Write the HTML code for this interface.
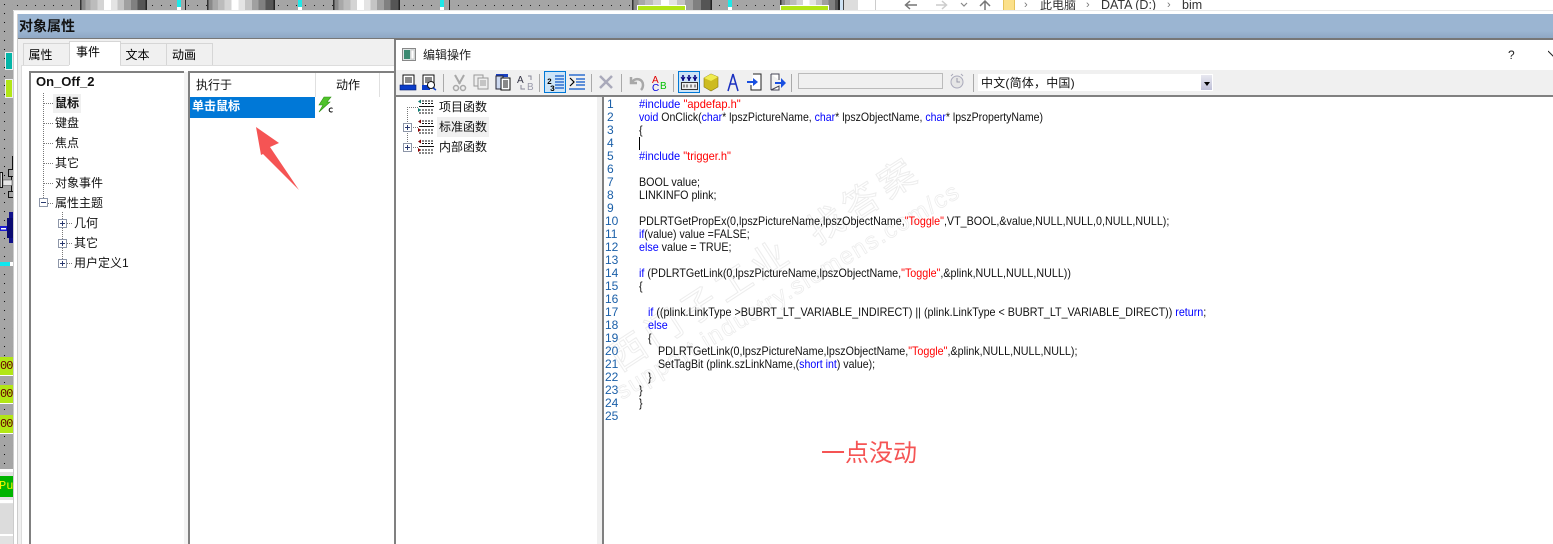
<!DOCTYPE html>
<html><head><meta charset="utf-8">
<style>
html,body{margin:0;padding:0;background:#fff}
#p{position:relative;width:1553px;height:544px;overflow:hidden;background:#fff;font-family:"Liberation Sans","Noto Sans CJK SC",sans-serif;color:#000}
#p div,#p svg{position:absolute}
.g{top:0;height:10px;background:linear-gradient(90deg,#333 0 2%,#8a8a8a 2% 8%,#a8a8a8 8% 16%,#bcbcbc 16% 26%,#d4d4d4 26% 36%,#fff 36% 46%,#e4e4e4 46% 56%,#c4c4c4 56% 66%,#a0a0a0 66% 76%,#808080 76% 86%,#555 86% 98%,#222 98% 100%)}
.c{top:0;height:10px;width:4px;background:linear-gradient(180deg,#1fe8e8 0 70%,#fff 70%)}
.t{font-size:12px;line-height:16px;white-space:nowrap;color:#111}
.k{font-size:12px;line-height:13px;white-space:pre;color:#111;left:639px;transform:scaleX(.894);transform-origin:0 0}
.n{font-size:12px;line-height:13px;color:#1a5fa8;left:607px}
.m{left:605px}
.k b{font-weight:normal;color:#00f}.k i{font-style:normal;color:#f00}
.tab{background:#f0f0f0;border:1px solid #d6d6d6;border-bottom:0;box-sizing:border-box;font-size:12px;text-align:center;padding-right:12px}
.grn{left:0;width:13px;background:#b2e616;font:12px/18px "Liberation Mono",monospace;letter-spacing:-1px;color:#600;overflow:hidden;text-align:left}
.pm{width:9px;height:9px;border:1px solid #8d96a8;background:#fff;box-sizing:border-box}
.pm:before{content:"";position:absolute;left:1px;top:3px;width:5px;height:1px;background:#2a3a70}
.pl:after{content:"";position:absolute;left:3px;top:1px;width:1px;height:5px;background:#2a3a70}
.dh{height:1px;background:repeating-linear-gradient(90deg,#777 0 1px,transparent 1px 2px)}
.dv{width:1px;background:repeating-linear-gradient(180deg,#777 0 1px,transparent 1px 2px)}
</style></head><body><div id="p">

<!-- background app -->
<div style="left:0;top:0;width:13px;height:470px;background-color:#a5a5a5;background-image:radial-gradient(#111 0.6px,transparent 0.8px);background-size:9px 9px"></div>
<div style="left:13px;top:0;width:845px;height:10px;background-color:#a5a5a5;background-image:radial-gradient(#222 0.6px,transparent 0.8px);background-size:9px 9px;background-position:0 1px"></div>
<div style="left:0;top:470px;width:13px;height:74px;background:#e2e2e2"></div>
<div style="left:5px;top:52px;width:8px;height:18px;background:#05b5a8;border:1px solid #eee;box-sizing:border-box"></div>
<div style="left:5px;top:79px;width:8px;height:19px;background:#b2e616;border:1px solid #eee;box-sizing:border-box"></div>
<svg style="left:0;top:150px" width="13" height="125" viewBox="0 0 13 125">
<path d="M12.500 6V20" stroke="#111"/>
<path d="M8.500 19.500h5v7h-5zM8.500 41.500h5v6h-5z" fill="#a5a5a5" stroke="#111"/>
<path d="M11.500 26v16" stroke="#111"/>
<path d="M0 22.500h2.500v15H0z" fill="#ddd" stroke="#111"/>
<rect x="3" y="30" width="9" height="5.500" fill="#e8e8e8" stroke="#444" stroke-width=".5"/>
<rect x="9" y="62" width="4" height="31" fill="#10108a"/><rect x="7" y="68" width="6" height="20" fill="#0a0a70"/>
<rect x="0" y="76" width="7" height="5" fill="#1a1ad0"/><rect x="1" y="78" width="5" height="1.500" fill="#fff"/>
<rect x="0" y="112" width="10" height="4" fill="#10e8f0"/><rect x="10" y="112" width="3" height="4" fill="#fff"/>
</svg>
<div class="grn" style="top:357px;height:18px">00</div>
<div class="grn" style="top:385px;height:18px">00</div>
<div class="grn" style="top:415px;height:18px">00</div>
<div style="left:0;top:375px;width:13px;height:1px;background:#fff"></div>
<div style="left:0;top:403px;width:13px;height:1px;background:#fff"></div>
<div style="left:0;top:433px;width:13px;height:1px;background:#fff"></div>
<div style="left:0;top:469px;width:13px;height:3px;background:#fff"></div>
<div style="left:0;top:476px;width:13px;height:21px;background:#00b400;color:#f4f400;font:12px/21px 'Liberation Mono',monospace;overflow:hidden;white-space:nowrap;text-indent:-1px">Pur</div>
<div style="left:0;top:500px;width:13px;height:3px;background:#fff"></div>
<div style="left:0;top:504px;width:13px;height:30px;background:#dcdcdc"></div>
<div style="left:0;top:534px;width:13px;height:2px;background:#fff"></div>

<!-- top strip gradients -->
<div class="g" style="left:80px;width:67px"></div><div class="g" style="left:207px;width:68px"></div><div class="g" style="left:333px;width:67px"></div>
<div class="g" style="left:632px;width:80px"></div><div class="g" style="left:780px;width:64px"></div>
<div style="left:185px;top:0;width:1px;height:10px;background:#222"></div>
<div style="left:449px;top:0;width:1px;height:10px;background:#222"></div>
<div class="c" style="left:177px"></div><div class="c" style="left:298px"></div><div class="c" style="left:440px"></div><div class="c" style="left:728px"></div>
<div style="left:637px;top:5px;width:49px;height:5px;background:#b2e616;border:1px solid #fff;border-bottom:0;box-sizing:border-box"></div>
<div style="left:780px;top:5px;width:49px;height:5px;background:#b2e616;border:1px solid #fff;border-bottom:0;box-sizing:border-box"></div>
<div style="left:838px;top:0;width:20px;height:10px;background:linear-gradient(90deg,#222 0 2px,#cfe3f5 2px 5px,#444 5px 6px,#ddd 6px 20px)"></div>

<!-- explorer strip -->
<div style="left:858px;top:0;width:695px;height:11px;background:#fff;overflow:hidden"></div>
<div style="left:875px;top:0;width:1px;height:11px;background:#ccc"></div>
<svg style="left:900px;top:0" width="100" height="11" viewBox="0 0 100 11" fill="none"><path d="M17 5H6M10 1L5.500 5l4.500 4" stroke="#777" stroke-width="1.500"/><path d="M36 5h10M42 1l4.500 4-4.500 4" stroke="#ccc" stroke-width="1.500"/><path d="M61 3l3 3 3-3" stroke="#888" stroke-width="1.200"/><path d="M85 11V2M80 6l5-5 5 5" stroke="#777" stroke-width="1.500"/></svg>
<div style="left:1003px;top:0;width:12px;height:11px;background:#fbe08a;border:1px solid #e5c25a;border-top:0;box-sizing:border-box"></div>
<div class="t" style="left:1040px;top:-3px;color:#333">此电脑</div>
<div class="t" style="left:1101px;top:-3px;font-size:12.500px;color:#333">DATA (D:)</div>
<div class="t" style="left:1182px;top:-3px;font-size:12.500px;color:#333">bim</div>
<div class="t" style="left:1024px;top:-3px;font-size:11px;color:#777">›</div>
<div class="t" style="left:1086px;top:-3px;font-size:11px;color:#777">›</div>
<div class="t" style="left:1167px;top:-3px;font-size:11px;color:#777">›</div>

<!-- object properties dialog -->
<div style="left:13px;top:10px;width:1540px;height:534px;background:#fff"></div>
<div style="left:13px;top:10px;width:1540px;height:1px;background:#e8e8e8"></div>
<div style="left:17px;top:14px;width:1536px;height:24px;background:linear-gradient(180deg,#9bb5d2 0 70%,#8fa8c4 100%)"></div>
<div style="left:17px;top:38px;width:1536px;height:1px;background:#777"></div>
<div style="left:13px;top:11px;width:1px;height:533px;background:#ccc"></div>
<div style="left:17px;top:14px;width:1px;height:530px;background:#ccc"></div>
<div style="left:18px;top:39px;width:376px;height:505px;background:#f0f0f0"></div>
<div class="t" style="left:19px;top:17px;font-size:14px;font-weight:bold;line-height:18px;color:#111">对象属性</div>

<div class="tab" style="left:23px;top:43px;width:47px;height:23px;line-height:23px">属性</div>
<div class="tab" style="left:69px;top:41px;width:52px;height:26px;line-height:21px;background:#fff;padding-right:14px">事件</div>
<div class="tab" style="left:120px;top:43px;width:47px;height:23px;line-height:23px">文本</div>
<div class="tab" style="left:166px;top:43px;width:47px;height:23px;line-height:23px;padding-right:11px">动画</div>
<div style="left:21px;top:65px;width:373px;height:479px;background:#fff;border-left:1px solid #ddd;border-top:1px solid #ddd;box-sizing:border-box"></div>
<div style="left:69px;top:65px;width:51px;height:2px;background:#fff"></div>

<div style="left:29px;top:71px;width:155px;height:473px;border-left:2px solid #808080;border-top:2px solid #808080;box-sizing:border-box;background:#fff"></div>
<div style="left:184px;top:72px;width:4px;height:472px;background:#f3f3f3"></div>
<div style="left:188px;top:71px;width:206px;height:473px;border-left:2px solid #808080;border-top:2px solid #808080;box-sizing:border-box;background:#fff"></div>

<div class="t" style="left:36px;top:74px;font-weight:bold;font-size:13px">On_Off_2</div>
<div style="left:53px;top:94px;width:28px;height:19px;background:#f0f0f0"></div>
<div class="t" style="left:55px;top:95px;font-weight:bold">鼠标</div>
<div class="t" style="left:55px;top:115px">键盘</div>
<div class="t" style="left:55px;top:135px">焦点</div>
<div class="t" style="left:55px;top:155px">其它</div>
<div class="t" style="left:55px;top:175px">对象事件</div>
<div class="t" style="left:55px;top:195px">属性主题</div>
<div class="t" style="left:74px;top:215px">几何</div>
<div class="t" style="left:74px;top:235px">其它</div>
<div class="t" style="left:74px;top:255px">用户定义1</div>
<div class="dv" style="left:43px;top:93px;height:105px"></div>
<div class="dh" style="left:44px;top:103px;width:9px"></div>
<div class="dh" style="left:44px;top:123px;width:9px"></div>
<div class="dh" style="left:44px;top:143px;width:9px"></div>
<div class="dh" style="left:44px;top:163px;width:9px"></div>
<div class="dh" style="left:44px;top:183px;width:9px"></div>
<div class="dh" style="left:44px;top:203px;width:9px"></div>
<div class="pm" style="left:39px;top:198px"></div>
<div class="dv" style="left:62px;top:212px;height:48px"></div>
<div class="dh" style="left:67px;top:223px;width:5px"></div>
<div class="dh" style="left:67px;top:243px;width:5px"></div>
<div class="dh" style="left:67px;top:263px;width:5px"></div>
<div class="pm pl" style="left:58px;top:219px"></div>
<div class="pm pl" style="left:58px;top:239px"></div>
<div class="pm pl" style="left:58px;top:259px"></div>

<div style="left:190px;top:73px;width:200px;height:24px;background:#fff"></div>
<div style="left:315px;top:73px;width:1px;height:24px;background:#e0e0e0"></div>
<div style="left:379px;top:73px;width:1px;height:24px;background:#e0e0e0"></div>
<div class="t" style="left:196px;top:77px">执行于</div>
<div class="t" style="left:336px;top:77px">动作</div>
<div style="left:190px;top:97px;width:125px;height:21px;background:#0078d7"></div>
<div class="t" style="left:192px;top:98px;font-weight:bold;color:#fff">单击鼠标</div>
<svg style="left:317px;top:96px" width="18" height="18" viewBox="0 0 18 18"><path d="M7 1h7L10 6h3L2 16l4-7H2z" fill="#4fc32a" stroke="#2e8f12" stroke-width=".6"/><path d="M15.500 12.500a2 2 0 1 0 0 3" fill="none" stroke="#000"/></svg>

<svg style="left:250px;top:120px" width="60" height="76" viewBox="250 120 60 76"><path d="M256 127L279 143 270 147 299 190 263 154 261 155z" fill="#f55454"/></svg>

<!-- edit dialog -->
<div style="left:394px;top:39px;width:1159px;height:505px;background:#fff;border-left:2px solid #808080;box-sizing:border-box"></div>
<div style="left:394px;top:39px;width:1159px;height:1px;background:#777"></div>
<div style="left:396px;top:70px;width:1157px;height:25px;background:#f0f0f0"></div>
<div style="left:396px;top:95px;width:1157px;height:2px;background:#808080"></div>
<svg style="left:402px;top:48px" width="14" height="13" viewBox="0 0 14 13"><rect x=".5" y=".5" width="13" height="12" fill="#dfe5e5" stroke="#888"/><rect x="2" y="2" width="6" height="9" fill="#3b8a72"/><rect x="9" y="2" width="3" height="9" fill="#fff" stroke="#aaa" stroke-width=".5"/></svg>
<div class="t" style="left:423px;top:47px;color:#222">编辑操作</div>
<div class="t" style="left:1508px;top:47px;color:#222;font-size:12px">?</div>
<svg style="left:1548px;top:50px" width="5" height="10"><path d="M0 1l8 8" stroke="#222"/></svg>

<!-- toolbar -->
<svg style="left:396px;top:70px" width="810" height="25" viewBox="396 70 810 25" fill="none">
<rect x="403" y="75" width="11" height="11" fill="#fff" stroke="#111"/><path d="M405 78h7M405 80h7M405 82h7" stroke="#111"/><rect x="400" y="85" width="16" height="5" fill="#0a3cc8" stroke="#001a70" stroke-width=".6"/>
<rect x="423" y="75" width="11" height="13" fill="#fff" stroke="#111"/><path d="M425 78h7M425 80h7M425 82h5" stroke="#111"/><rect x="422" y="85" width="8" height="5" fill="#0a3cc8"/><circle cx="431" cy="85" r="3.500" fill="#fff" stroke="#111"/><path d="M433 88l3 2" stroke="#0a3cc8" stroke-width="1.500"/>
<path d="M443.500 74v18" stroke="#aaa"/>
<path d="M455 75l5 9M464 75l-5 9" stroke="#a8a8a8" stroke-width="2"/><circle cx="456" cy="88" r="2.500" stroke="#a8a8a8" stroke-width="1.500"/><circle cx="463" cy="88" r="2.500" stroke="#a8a8a8" stroke-width="1.500"/>
<rect x="474" y="75" width="9" height="11" fill="#eee" stroke="#999"/><rect x="478" y="78" width="10" height="11" fill="#eee" stroke="#999"/><path d="M480 81h6M480 83h6M480 85h6" stroke="#999"/>
<rect x="496" y="74" width="12" height="3" fill="#1a40c0"/><rect x="496" y="76" width="7" height="13" fill="#cdd9f0" stroke="#223"/><rect x="501" y="78" width="9" height="12" fill="#fff" stroke="#111"/><path d="M503 81h5M503 83h5M503 85h5M503 87h5" stroke="#111"/>
<text x="517" y="83" font-family="Liberation Sans" font-size="10" fill="#334">A</text><text x="527" y="90" font-family="Liberation Sans" font-size="10" fill="#99a">B</text><path d="M528 76h3v4M521 85v4h4" stroke="#889"/>
<path d="M539.500 74v18" stroke="#aaa"/>
<rect x="544.500" y="71.500" width="21" height="21" fill="#cde4f7" stroke="#0078d7"/>
<path d="M555 76h9M555 79h9M555 82h9M555 85h9M555 88h9" stroke="#2f6fd0" stroke-width="1.500"/>
<text x="547" y="84" font-family="Liberation Mono" font-size="8" fill="#000" font-weight="bold">2</text><text x="550" y="91" font-family="Liberation Mono" font-size="8" fill="#000" font-weight="bold">3</text>
<path d="M569 75h16M569 89h16M576 79h9M576 82h9M576 85h9" stroke="#2f6fd0" stroke-width="1.500"/><path d="M570 78l4 4-4 4" stroke="#000" stroke-width="1.200"/>
<path d="M591.500 74v18" stroke="#aaa"/>
<path d="M600 76l12 12M612 76l-12 12" stroke="#aab" stroke-width="2.500"/>
<path d="M621.500 74v18" stroke="#aaa"/>
<path d="M631 77v6h6M632 82c4-5 11-3 11 3 0 2-1 4-2 5" stroke="#a8a8a8" stroke-width="2.500"/>
<text x="652" y="83" font-family="Liberation Sans" font-size="10" fill="#e00000">A</text><text x="652" y="91" font-family="Liberation Sans" font-size="10" fill="#0000e0">C</text><text x="660" y="89" font-family="Liberation Sans" font-size="10" fill="#00c000">B</text>
<path d="M673.500 74v18" stroke="#aaa"/>
<rect x="678.500" y="71.500" width="21" height="21" fill="#cde4f7" stroke="#0078d7"/>
<path d="M683 75v6M689 75v6M695 75v6" stroke="#000080" stroke-width="1.500"/><path d="M681 77l2 3 2-3M687 77l2 3 2-3M693 77l2 3 2-3" stroke="#000080"/>
<rect x="681.500" y="82.500" width="16" height="7" fill="#eee" stroke="#333"/><path d="M684 84.500v3M687 84.500v3M691 84.500v3M695 84.500v3" stroke="#333"/>
<path d="M704 78l7-4 7 3v10l-7 4-7-4z" fill="#cdbb20" stroke="#8a7a10" stroke-width=".6"/><path d="M704 78l7 3 7-4-7-3z" fill="#f0ec50"/>
<path d="M733 74l-5 17M733 74l5 17M730 84h6" stroke="#1a30c0" stroke-width="1.500"/>
<path d="M753 74h8v16h-10v-5" fill="#fff" stroke="#222"/><path d="M747 82h8" stroke="#1a50e0" stroke-width="2"/><path d="M753 78l5 4-5 4z" fill="#1a50e0"/>
<path d="M771 74h8v6M779 86v4h-8z" fill="#fff" stroke="#445"/><path d="M771 74v16" stroke="#445"/><path d="M775 83h8" stroke="#1a50e0" stroke-width="2"/><path d="M781 78l5 5-5 5z" fill="#1a50e0"/>
<path d="M791.500 74v18" stroke="#aaa"/>
<rect x="798.500" y="73.500" width="144" height="15" fill="#f0f0f0" stroke="#bbb"/>
<circle cx="957" cy="82" r="6" fill="#e6e6e6" stroke="#aab"/><path d="M957 78v4h3" stroke="#99a"/><path d="M951 76l2-2M963 76l-2-2" stroke="#aab"/>
<path d="M973.500 74v18" stroke="#aaa"/>
</svg>
<div style="left:978px;top:74px;width:235px;height:17px;background:#fff"></div>
<div class="t" style="left:981px;top:75px;font-size:12px;letter-spacing:.2px">中文(简体，中国)</div>
<div style="left:1201px;top:75px;width:11px;height:15px;background:linear-gradient(180deg,#e8e8f0,#bfc0d8)"></div>
<div style="left:1204px;top:82px;width:0;height:0;border-left:3px solid transparent;border-right:3px solid transparent;border-top:4px solid #000"></div>

<!-- function tree -->
<div style="left:396px;top:97px;width:201px;height:447px;background:#fff"></div>
<div style="left:597px;top:97px;width:5px;height:447px;background:#f0f0f0"></div>
<div style="left:602px;top:97px;width:2px;height:447px;background:#808080"></div>
<div style="left:437px;top:117px;width:52px;height:20px;background:#f0f0f0"></div>
<div class="t" style="left:439px;top:99px">项目函数</div>
<div class="t" style="left:439px;top:119px">标准函数</div>
<div class="t" style="left:439px;top:139px">内部函数</div>
<div class="dv" style="left:407px;top:107px;height:42px"></div>
<div class="dh" style="left:407px;top:107px;width:11px"></div>
<div class="dh" style="left:411px;top:127px;width:7px"></div>
<div class="dh" style="left:411px;top:147px;width:7px"></div>
<div class="pm pl" style="left:403px;top:123px"></div>
<div class="pm pl" style="left:403px;top:143px"></div>
<svg style="left:417px;top:99px" width="18" height="58" viewBox="0 0 18 58" fill="none">
<g><path d="M5 2h12M5 4.500h12" stroke="#111" stroke-dasharray="2 1"/><path d="M1 2.500l3-2v4z" fill="#0a7a70"/><path d="M2 7.500h15" stroke="#111"/><path d="M2 11h15M2 14h15" stroke="#111" stroke-dasharray="2 1"/><path d="M1 9l3 2-3 2z" fill="#0a7a70"/></g>
<g transform="translate(0,20)"><path d="M5 2h12M5 4.500h12" stroke="#111" stroke-dasharray="2 1"/><path d="M1 2.500l3-2v4z" fill="#800"/><path d="M2 7.500h15" stroke="#111"/><path d="M2 11h15M2 14h15" stroke="#111" stroke-dasharray="2 1"/><path d="M1 9l3 2-3 2z" fill="#800"/></g>
<g transform="translate(0,40)"><path d="M5 2h12M5 4.500h12" stroke="#111" stroke-dasharray="2 1"/><path d="M1 2.500l3-2v4z" fill="#800"/><path d="M2 7.500h15" stroke="#111"/><path d="M2 11h15M2 14h15" stroke="#111" stroke-dasharray="2 1"/><path d="M1 9l3 2-3 2z" fill="#800"/></g>
</svg>

<!-- watermark -->
<svg style="left:605px;top:140px" width="400" height="290" viewBox="605 140 400 290">
<g fill="#fff" stroke="#ededed" stroke-width="1" font-family="Liberation Sans,Noto Sans CJK SC,sans-serif">
<text transform="translate(620,372) rotate(-33)" font-size="36" letter-spacing="6">西门子工业</text>
<text transform="translate(818,245) rotate(-33)" font-size="36" letter-spacing="6">找答案</text>
<text transform="translate(622,400) rotate(-31)" font-size="24" stroke-width=".8" textLength="395" lengthAdjust="spacing">support.industry.siemens.com/cs</text>
</g></svg>

<!-- code -->
<div class="n" style="top:98px">1</div><div class="n" style="top:111px">2</div><div class="n" style="top:124px">3</div><div class="n" style="top:137px">4</div><div class="n" style="top:150px">5</div><div class="n" style="top:163px">6</div><div class="n" style="top:176px">7</div><div class="n" style="top:189px">8</div><div class="n" style="top:202px">9</div><div class="n m" style="top:215px">10</div><div class="n m" style="top:228px">11</div><div class="n m" style="top:241px">12</div><div class="n m" style="top:254px">13</div><div class="n m" style="top:267px">14</div><div class="n m" style="top:280px">15</div><div class="n m" style="top:293px">16</div><div class="n m" style="top:306px">17</div><div class="n m" style="top:319px">18</div><div class="n m" style="top:332px">19</div><div class="n m" style="top:345px">20</div><div class="n m" style="top:358px">21</div><div class="n m" style="top:371px">22</div><div class="n m" style="top:384px">23</div><div class="n m" style="top:397px">24</div><div class="n m" style="top:410px">25</div>
<div class="k" style="top:98px;transform:scaleX(.925)"><b>#include</b> <i>"apdefap.h"</i></div>
<div class="k" style="top:111px;transform:scaleX(.878)"><b>void</b> OnClick(<b>char</b>* lpszPictureName, <b>char</b>* lpszObjectName, <b>char</b>* lpszPropertyName)</div>
<div class="k" style="top:124px">{</div>
<div style="left:639px;top:137px;width:1px;height:13px;background:#000"></div>
<div class="k" style="top:150px;transform:scaleX(.92)"><b>#include</b> <i>"trigger.h"</i></div>
<div class="k" style="top:176px">BOOL value;</div>
<div class="k" style="top:189px">LINKINFO plink;</div>
<div class="k" style="top:215px">PDLRTGetPropEx(0,lpszPictureName,lpszObjectName,<i>"Toggle"</i>,VT_BOOL,&amp;value,NULL,NULL,0,NULL,NULL);</div>
<div class="k" style="top:228px;transform:scaleX(.88)"><b>if</b>(value) value =FALSE;</div>
<div class="k" style="top:241px"><b>else</b> value = TRUE;</div>
<div class="k" style="top:267px"><b>if</b> (PDLRTGetLink(0,lpszPictureName,lpszObjectName,<i>"Toggle"</i>,&amp;plink,NULL,NULL,NULL))</div>
<div class="k" style="top:280px">{</div>
<div class="k" style="top:306px;left:648px"><b>if</b> ((plink.LinkType &gt;BUBRT_LT_VARIABLE_INDIRECT) || (plink.LinkType &lt; BUBRT_LT_VARIABLE_DIRECT)) <b>return</b>;</div>
<div class="k" style="top:319px;left:648px"><b>else</b></div>
<div class="k" style="top:332px;left:648px">{</div>
<div class="k" style="top:345px;left:658px">PDLRTGetLink(0,lpszPictureName,lpszObjectName,<i>"Toggle"</i>,&amp;plink,NULL,NULL,NULL);</div>
<div class="k" style="top:358px;left:658px;transform:scaleX(.882)">SetTagBit (plink.szLinkName,(<b>short int</b>) value);</div>
<div class="k" style="top:371px;left:648px">}</div>
<div class="k" style="top:384px">}</div>
<div class="k" style="top:397px">}</div>

<div style="left:821px;top:439px;font-size:24px;line-height:30px;color:#f55454;white-space:nowrap">一点没动</div>
</div></body></html>
